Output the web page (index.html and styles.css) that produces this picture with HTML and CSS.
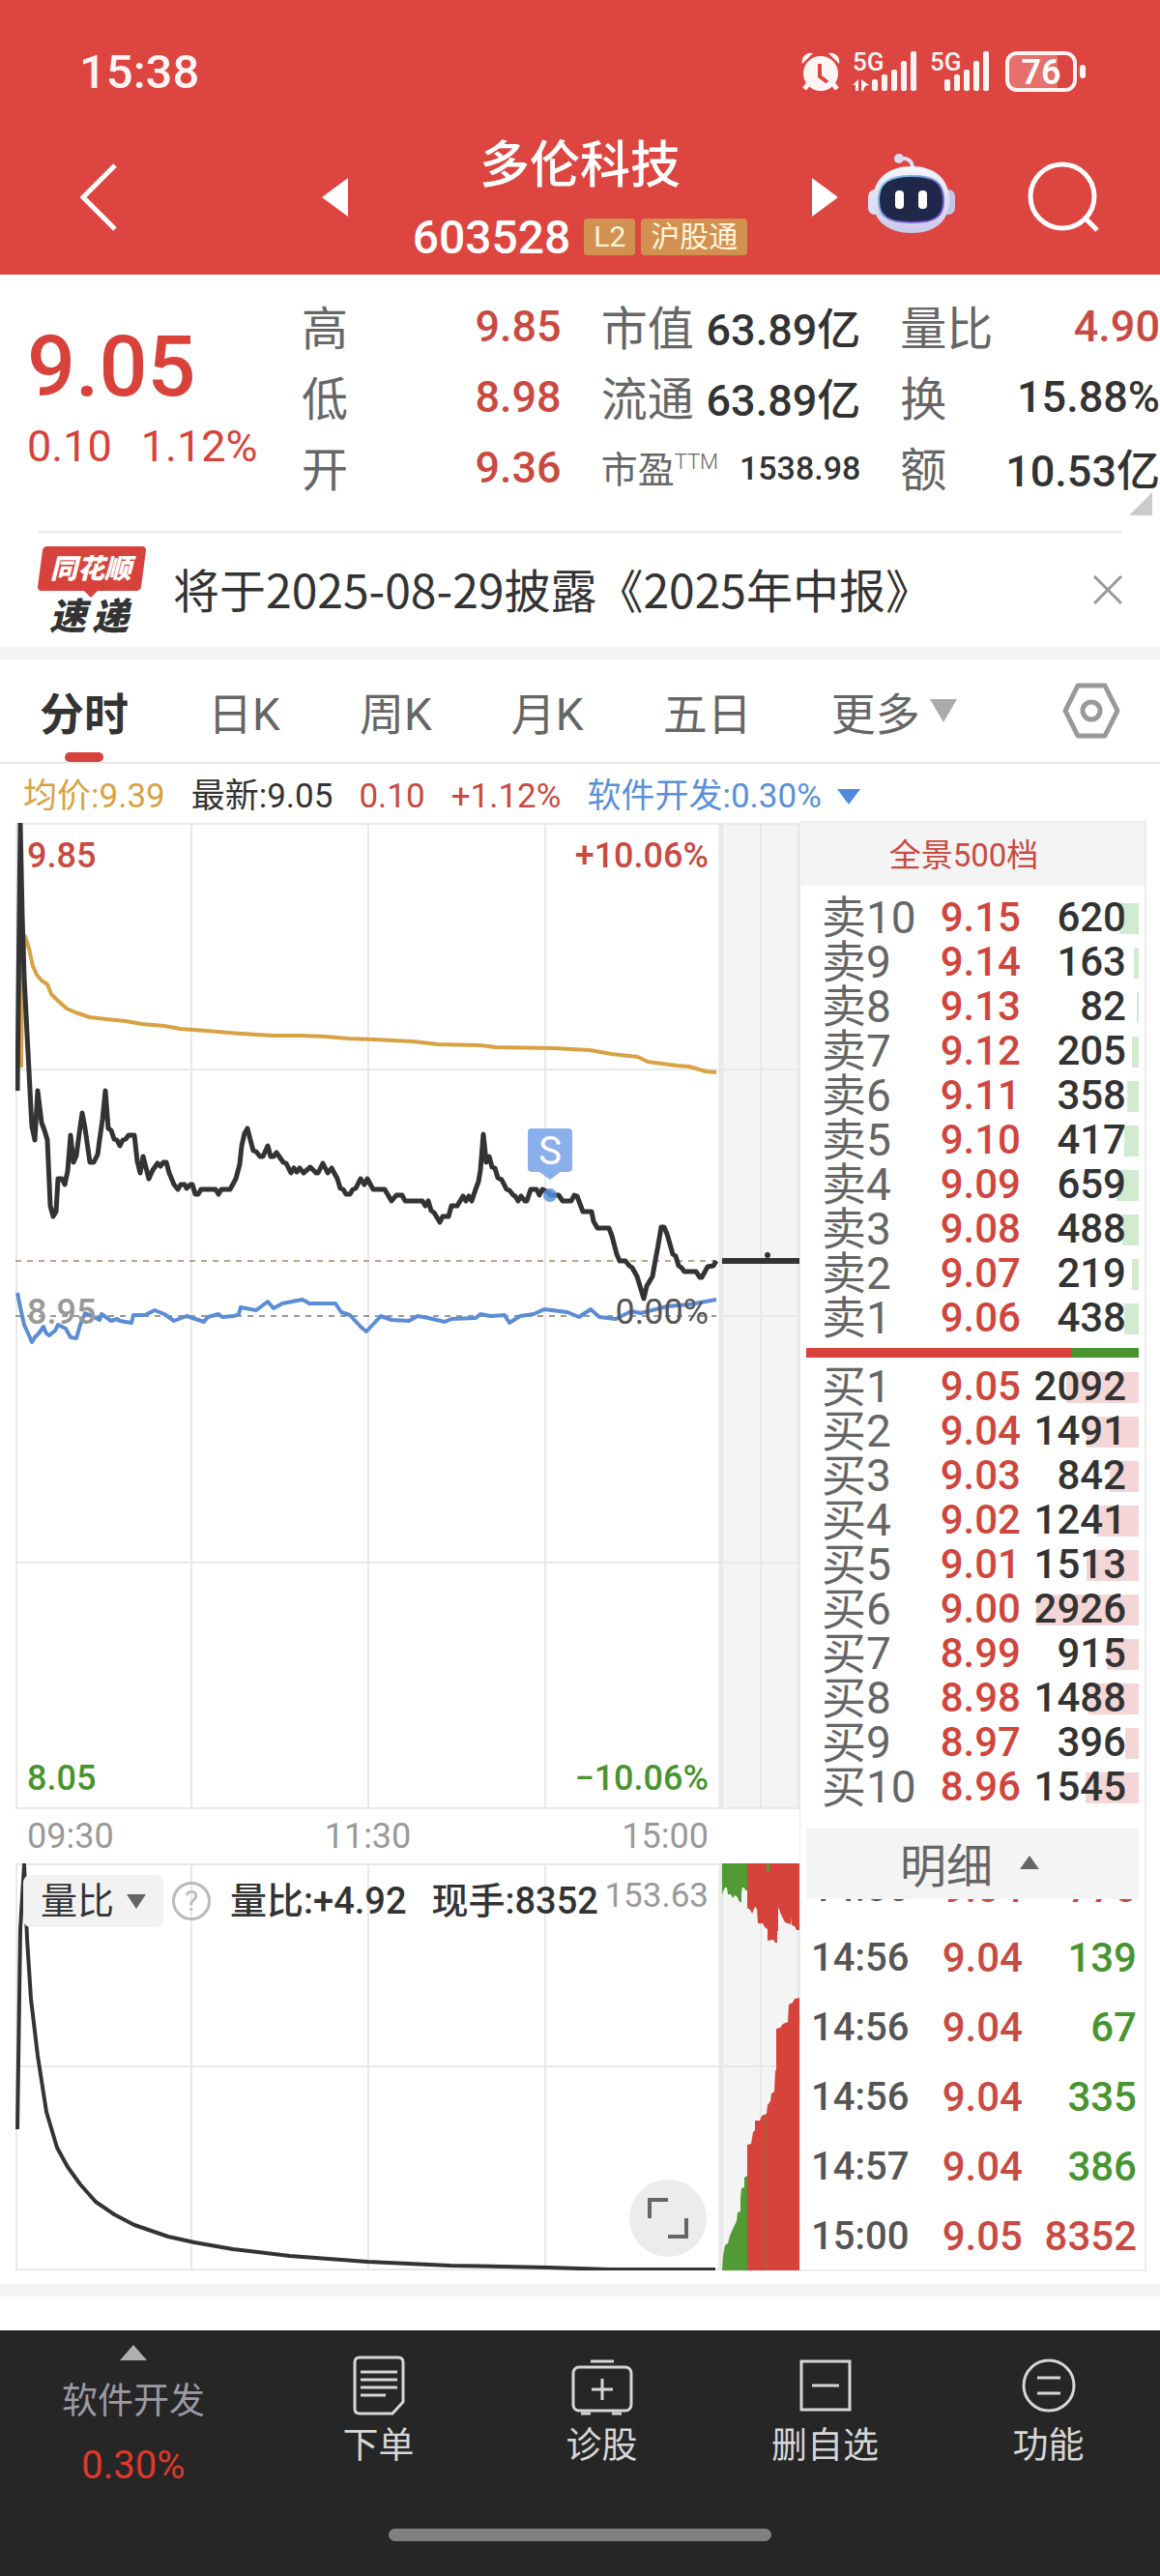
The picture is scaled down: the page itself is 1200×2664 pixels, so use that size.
FILE: index.html
```html
<!DOCTYPE html>
<html lang="zh-CN">
<head>
  <meta charset="UTF-8">
  <meta name="viewport" content="width=device-width, initial-scale=1">
  <title>多伦科技 603528</title>
  <link rel="stylesheet" href="styles.css">
</head>
<body>
  <header class="header">
    <div class="status-bar">
      <span class="clock">15:38</span>
      <div class="status-icons">
        <svg class="alarm" width="40" height="42" viewBox="0 0 40 42" fill="#fff4f4">
          <circle cx="20" cy="23" r="18"/>
          <path d="M1 13a9 9 0 0 1 11-11zM39 13A9 9 0 0 0 28 2z"/>
          <path d="M8 33l-5 6M32 33l5 6" stroke="#fff4f4" stroke-width="5"/>
          <path d="M19 13v13l8 6" fill="none" stroke="#dd4540" stroke-width="4"/>
        </svg>
        <svg class="signal" width="67" height="42" viewBox="0 0 67 42" fill="#fff4f4">
          <text x="0" y="20" class="signal-text">5G</text>
          <path d="M6 29v12H3v-6H0zM9 29l8 6-4 1-2 5H9z"/>
          <rect x="20" y="29" width="6" height="12" rx="2"/>
          <rect x="30" y="24" width="6" height="17" rx="2"/>
          <rect x="40" y="19" width="6" height="22" rx="2"/>
          <rect x="50" y="10" width="6" height="31" rx="2"/>
          <rect x="60" y="0" width="6" height="41" rx="2"/>
        </svg>
        <svg class="signal" width="62" height="42" viewBox="0 0 62 42" fill="#fff4f4">
          <text x="0" y="20" class="signal-text">5G</text>
          <rect x="15" y="29" width="6" height="12" rx="2"/>
          <rect x="25" y="24" width="6" height="17" rx="2"/>
          <rect x="35" y="19" width="6" height="22" rx="2"/>
          <rect x="45" y="10" width="6" height="31" rx="2"/>
          <rect x="55" y="0" width="6" height="41" rx="2"/>
        </svg>
        <span class="battery">76</span>
      </div>
    </div>

    <nav class="title-bar">
      <div class="title-side">
        <button class="icon-btn" aria-label="返回">
          <svg width="40" height="72" viewBox="0 0 40 72"><path d="M37 3L4 36l33 33" fill="none" stroke="#fff" stroke-width="5"/></svg>
        </button>
        <button class="icon-btn" aria-label="上一只">
          <svg width="27" height="40" viewBox="0 0 27 40"><path d="M27 0v40L0 20z" fill="#fff"/></svg>
        </button>
      </div>
      <div class="title">
        <h1>多伦科技</h1>
        <div class="code-line">
          <span class="code">603528</span>
          <span class="badge">L2</span>
          <span class="badge">沪股通</span>
        </div>
      </div>
      <div class="title-side">
        <button class="icon-btn" aria-label="下一只">
          <svg width="27" height="40" viewBox="0 0 27 40"><path d="M0 0v40l27-20z" fill="#fff"/></svg>
        </button>
        <button class="icon-btn robot" aria-label="智能助手">
          <svg width="92" height="84" viewBox="0 0 92 84">
            <defs>
              <linearGradient id="shell" x1="0" y1="0" x2="0" y2="1">
                <stop offset="0" stop-color="#f6f6fd"/>
                <stop offset="1" stop-color="#c9c9ea"/>
              </linearGradient>
              <linearGradient id="rim" x1="0" y1="0" x2="1" y2="1">
                <stop offset="0" stop-color="#7fd6e6"/>
                <stop offset="1" stop-color="#6a35d0"/>
              </linearGradient>
            </defs>
            <path d="M33 6c9-1 14 2 14 10" fill="none" stroke="#dcdcf2" stroke-width="4"/>
            <circle cx="33" cy="6" r="5" fill="#dcdcf2"/>
            <rect x="1" y="38" width="14" height="26" rx="7" fill="#dedef4"/>
            <rect x="77" y="38" width="14" height="26" rx="7" fill="#c4c4e6"/>
            <path d="M46 14c24 0 39 13 39 35S70 83 46 83 6 71 6 49s16-35 40-35z" fill="url(#shell)"/>
            <path d="M46 24c24 0 33 7 33 25S69 72 46 72 12 67 12 49s10-25 34-25z" fill="#1f2849" stroke="url(#rim)" stroke-width="2"/>
            <rect x="29" y="39" width="9" height="19" rx="4" fill="#fff"/>
            <rect x="53" y="39" width="9" height="19" rx="4" fill="#fff"/>
          </svg>
        </button>
        <button class="icon-btn" aria-label="搜索">
          <svg width="76" height="76" viewBox="0 0 76 76"><circle cx="37" cy="37" r="33" fill="none" stroke="#fff" stroke-width="5"/><path d="M60 59l13 13" stroke="#fff" stroke-width="5"/></svg>
        </button>
      </div>
    </nav>
  </header>

  <section class="quote">
    <div class="price">
      <div class="price-now">9.05</div>
      <div class="price-change"><span>0.10</span><span>1.12%</span></div>
    </div>
    <dl class="stats">
      <div class="stat"><dt>高</dt><dd class="up">9.85</dd></div>
      <div class="stat"><dt>市值</dt><dd>63.89亿</dd></div>
      <div class="stat"><dt>量比</dt><dd class="up">4.90</dd></div>
      <div class="stat"><dt>低</dt><dd class="up">8.98</dd></div>
      <div class="stat"><dt>流通</dt><dd>63.89亿</dd></div>
      <div class="stat"><dt>换</dt><dd>15.88%</dd></div>
      <div class="stat"><dt>开</dt><dd class="up">9.36</dd></div>
      <div class="stat small"><dt>市盈<sup>TTM</sup></dt><dd>1538.98</dd></div>
      <div class="stat"><dt>额</dt><dd>10.53亿</dd></div>
    </dl>
    <span class="corner"></span>
  </section>

  <section class="news">
    <svg class="news-logo" width="112" height="92" viewBox="0 0 112 92">
      <path d="M10 1h98q4 0 4 4l-5 38q-1 4-5 4H62l-7 7-7-7H4q-4 0-4-4L5 5q1-4 5-4z" fill="#d8423c"/>
      <text x="13" y="34" class="logo-top">同花顺</text>
      <text x="12" y="87" class="logo-bottom">速</text>
      <text x="56" y="87" class="logo-bottom">递</text>
    </svg>
    <a class="news-text" href="#">将于2025-08-29披露《2025年中报》</a>
    <button class="icon-btn" aria-label="关闭">
      <svg width="30" height="30" viewBox="0 0 30 30"><path d="M1 1l28 28M29 1L1 29" stroke="#999" stroke-width="3"/></svg>
    </button>
  </section>

  <nav class="tabs">
    <button class="tab active">分时</button>
    <button class="tab">日K</button>
    <button class="tab">周K</button>
    <button class="tab">月K</button>
    <button class="tab">五日</button>
    <button class="tab">更多<svg width="28" height="24" viewBox="0 0 28 24"><path d="M0 0h28L14 24z" fill="#aaa"/></svg></button>
    <button class="icon-btn settings" aria-label="设置">
      <svg width="60" height="60" viewBox="0 0 60 60" fill="none" stroke="#999" stroke-width="5" stroke-linejoin="round"><path d="M16 4h28l13 26-13 26H16L3 30z"/><circle cx="30" cy="30" r="9"/></svg>
    </button>
  </nav>

  <div class="legend">
    <span class="avg">均价:9.39</span>
    <span>最新:9.05</span>
    <span class="up">0.10</span>
    <span class="up">+1.12%</span>
    <button class="sector">软件开发:0.30%<svg width="24" height="16" viewBox="0 0 24 16"><path d="M0 0h24L12 16z" fill="#4f8ae0"/></svg></button>
  </div>

  <main class="board">
    <div class="charts">
      <!-- 分时走势 -->
      <div class="plot trend">
        <svg class="plot-svg" viewBox="0 0 811 1020" preserveAspectRatio="none">
          <rect x="731" y="0" width="80" height="1020" fill="#f4f4f4"/>
          <g class="grid">
            <path d="M182 0v1020M365 0v1020M548 0v1020M771 0v1020"/>
            <path d="M0 255h811M0 765h811M731 510h80"/>
            <path d="M1 1h809v1018H1z"/>
            <path d="M730 0v1020" class="grid-bold"/>
          </g>
          <path d="M0 510h725" class="dash" stroke="#999"/>
          <path d="M0 453h725" class="dash" stroke="#b3a88a"/>
          <polyline class="line-avg" points="6,253 7,160 10,117 14,130 18,148 22,157 27,163 33,167 37,177 44,184 53,192 62,196 77,201 94,203 114,205 131,208 154,210 171,213 197,215 234,218 267,220 297,220 321,221 344,223 371,224 391,225 411,226 437,229 481,230 497,232 557,233 594,235 617,239 644,242 654,247 684,251 697,252 714,257 725,258"/>
          <polyline class="line-sector" points="2,486 5,501 9,519 14,530 17,537 20,532 24,528 29,521 32,528 35,530 41,525 44,519 52,523 57,532 63,533 67,519 72,507 77,509 87,514 89,508 99,515 105,513 108,515 120,517 122,509 134,509 144,504 154,508 164,515 177,510 195,516 199,511 210,508 214,511 226,510 231,508 233,501 249,504 261,495 267,502 276,497 297,493 304,497 331,497 337,506 346,509 357,521 363,526 378,510 389,514 407,515 416,510 427,512 444,516 451,513 476,512 481,508 491,510 506,509 511,517 522,510 536,508 547,503 571,506 583,511 595,503 604,511 621,513 627,510 637,505 647,507 674,500 697,498 725,493"/>
          <polyline class="line-price" points="2,277 5,1 7,96 9,160 12,218 16,296 17,314 20,328 23,277 27,310 30,318 33,328 36,396 39,407 42,402 44,368 48,368 51,374 54,360 57,323 60,351 63,344 66,321 69,300 72,316 77,351 81,351 85,343 87,328 90,307 93,277 96,316 99,318 102,327 105,328 108,334 111,328 114,327 117,323 123,323 126,350 129,362 132,345 138,368 142,359 147,352 150,355 153,351 156,351 159,362 164,374 168,379 171,374 175,374 177,378 181,374 183,374 186,384 189,384 192,379 207,379 210,384 213,379 222,379 228,368 232,353 234,334 237,321 240,316 243,328 246,339 249,340 253,345 256,345 261,334 264,345 267,345 270,341 277,351 280,352 285,362 288,357 291,361 294,357 298,362 305,356 311,362 313,362 318,352 323,362 327,357 333,368 336,378 339,379 342,384 346,384 349,379 352,378 357,368 361,374 364,368 370,379 382,379 389,391 394,385 400,385 403,391 421,391 424,396 427,391 430,401 433,403 439,413 442,407 448,407 451,396 457,396 463,386 466,391 469,386 472,391 476,379 479,371 481,359 484,322 487,351 490,345 493,356 496,357 499,367 503,369 508,379 511,380 515,385 517,386 520,391 523,386 527,391 529,391 533,379 539,379 542,385 545,379 551,382 553,385 562,385 566,391 575,391 578,385 581,386 584,394 587,402 596,402 598,412 602,419 614,419 617,427 622,446 625,453 631,453 635,458 638,460 643,469 650,492 653,479 659,469 662,452 665,436 668,418 671,418 674,425 680,446 683,448 686,458 689,460 692,464 704,464 708,470 710,470 716,459 722,458 725,453"/>
          <path d="M731 453h80" stroke="#333" stroke-width="6"/>
          <circle cx="778" cy="447" r="3" fill="#333"/>
          <!-- 卖出标记 -->
          <path d="M534 316h38q4 0 4 4v37q0 4-4 4h-8l-11 8-11-8h-8q-4 0-4-4v-37q0-4 4-4z" fill="#8ab0ec"/>
          <text x="553" y="353" class="marker-text">S</text>
          <circle cx="553" cy="385" r="7" fill="#5b90e0" fill-opacity=".85"/>
        </svg>
        <div class="plot-row"><span class="up">9.85</span><span class="up">+10.06%</span></div>
        <div class="plot-row zero"><span class="muted">8.95</span><span class="dim">0.00%</span></div>
        <div class="plot-row"><span class="down">8.05</span><span class="down">−10.06%</span></div>
      </div>

      <div class="time-axis"><span>09:30</span><span>11:30</span><span>15:00</span></div>

      <!-- 量比 -->
      <div class="plot ratio">
        <svg class="plot-svg" viewBox="0 0 811 421" preserveAspectRatio="none">
          <rect x="731" y="0" width="80" height="421" fill="#f4f4f4"/>
          <g class="grid">
            <path d="M182 0v421M365 0v421M548 0v421M771 0v421"/>
            <path d="M0 210h811"/>
            <path d="M1 1h809v419H1z"/>
            <path d="M730 0v421" class="grid-bold"/>
          </g>
          <path fill="#529a33" d="M731 0h27v28h-3l-1-3h-2l-1 6v9h-2l-2-5-3-2-2 3-2-4h-3l-1-7h-2l-2 4-1 4z"/>
          <path fill="#d6433b" d="M757 0h54v69h-3l-2-4-3-1-1-8v7l-6-2-4-8-3-8v25h-1v12h-2l-2-3-6 1V68l-3-2-2-4h-5l-1-15-2-2-3 7-2-4-3-2z"/>
          <path fill="#529a33" d="M777 0h3v9h-3z"/>
          <path fill="#529a33" d="M731 421l1-15 2-11 3-2 2-8 4-9 3-6 1-9 3-1v-14l1-10 3-1v-10l3-2v98z"/>
          <path fill="#d6433b" d="M757 421V291l4-1 2-12 2-2v-10h5l2-5 5-2 1-9 3-4 1-8 3-2 1-21 1-2v-42l4-1 3-4 5-2 1-18 4-2 2-4 5-1v282z"/>
          <path d="M777 259v162" stroke="#7d7b2c" stroke-width="1"/>
          <polyline class="line-ratio" points="2,275 5,68 9,1 12,78 16,140 23,199 32,257 43,294 54,314 67,332 83,350 102,363 123,374 158,386 185,392 225,399 284,406 364,412 450,416 552,418 616,420 724,420"/>
        </svg>
        <div class="ratio-head">
          <button class="ratio-pick">量比<svg width="20" height="15" viewBox="0 0 20 15"><path d="M0 0h20L10 15z" fill="#666"/></svg></button>
          <button class="help" aria-label="说明">?</button>
          <span class="ratio-value">量比:+4.92</span>
          <span class="ratio-value">现手:8352</span>
          <span class="ratio-max">153.63</span>
        </div>
        <button class="expand" aria-label="全屏">
          <svg width="44" height="44" viewBox="0 0 44 44"><path d="M3 22V3h19M41 22v19H22" fill="none" stroke="#666" stroke-width="4"/></svg>
        </button>
      </div>
    </div>

    <aside class="depth">
      <button class="depth-head">全景500档</button>
      <table class="book sell">
        <tr><th>卖10</th><td>9.15</td><td><i style="width:20px"></i><b>620</b></td></tr>
        <tr><th>卖9</th><td>9.14</td><td><i style="width:5px"></i><b>163</b></td></tr>
        <tr><th>卖8</th><td>9.13</td><td><i style="width:2px"></i><b>82</b></td></tr>
        <tr><th>卖7</th><td>9.12</td><td><i style="width:7px"></i><b>205</b></td></tr>
        <tr><th>卖6</th><td>9.11</td><td><i style="width:12px"></i><b>358</b></td></tr>
        <tr><th>卖5</th><td>9.10</td><td><i style="width:15px"></i><b>417</b></td></tr>
        <tr><th>卖4</th><td>9.09</td><td><i style="width:23px"></i><b>659</b></td></tr>
        <tr><th>卖3</th><td>9.08</td><td><i style="width:17px"></i><b>488</b></td></tr>
        <tr><th>卖2</th><td>9.07</td><td><i style="width:7px"></i><b>219</b></td></tr>
        <tr><th>卖1</th><td>9.06</td><td><i style="width:15px"></i><b>438</b></td></tr>
      </table>
      <div class="strength"><span style="width:80%"></span></div>
      <table class="book buy">
        <tr><th>买1</th><td>9.05</td><td><i style="width:75px"></i><b>2092</b></td></tr>
        <tr><th>买2</th><td>9.04</td><td><i style="width:54px"></i><b>1491</b></td></tr>
        <tr><th>买3</th><td>9.03</td><td><i style="width:30px"></i><b>842</b></td></tr>
        <tr><th>买4</th><td>9.02</td><td><i style="width:43px"></i><b>1241</b></td></tr>
        <tr><th>买5</th><td>9.01</td><td><i style="width:54px"></i><b>1513</b></td></tr>
        <tr><th>买6</th><td>9.00</td><td><i style="width:106px"></i><b>2926</b></td></tr>
        <tr><th>买7</th><td>8.99</td><td><i style="width:33px"></i><b>915</b></td></tr>
        <tr><th>买8</th><td>8.98</td><td><i style="width:52px"></i><b>1488</b></td></tr>
        <tr><th>买9</th><td>8.97</td><td><i style="width:14px"></i><b>396</b></td></tr>
        <tr><th>买10</th><td>8.96</td><td><i style="width:55px"></i><b>1545</b></td></tr>
      </table>
      <button class="detail-head">明细<svg width="20" height="14" viewBox="0 0 20 14"><path d="M0 14h20L10 0z" fill="#666"/></svg></button>
      <div class="ticks-wrap">
        <table class="ticks">
          <tr><td>14:56</td><td>9.04</td><td class="up">776</td></tr>
          <tr><td>14:56</td><td>9.04</td><td class="down">139</td></tr>
          <tr><td>14:56</td><td>9.04</td><td class="down">67</td></tr>
          <tr><td>14:56</td><td>9.04</td><td class="down">335</td></tr>
          <tr><td>14:57</td><td>9.04</td><td class="down">386</td></tr>
          <tr><td>15:00</td><td>9.05</td><td class="up">8352</td></tr>
        </table>
      </div>
    </aside>
  </main>

  <footer class="footer">
    <div class="toolbar">
      <button class="index-btn">
        <svg width="28" height="16" viewBox="0 0 28 16"><path d="M0 16h28L14 0z" fill="#b0b0b0"/></svg>
        <span class="index-name">软件开发</span>
        <span class="index-value">0.30%</span>
      </button>
      <button class="tool">
        <svg width="64" height="64" viewBox="0 0 64 64" fill="none" stroke="#d6d6d6" stroke-width="3"><path d="M12 3h40q5 0 5 5v41L46 61H12q-5 0-5-5V8q0-5 5-5z"/><path d="M13 18h38M13 26h38M13 34h38M13 42h26"/></svg>
        <span>下单</span>
      </button>
      <button class="tool">
        <svg width="64" height="64" viewBox="0 0 64 64" fill="none" stroke="#d6d6d6" stroke-width="3"><rect x="2" y="13" width="60" height="45" rx="6"/><path d="M20 7h24M32 25v22M21 36h22M10 61h10M42 61h10"/></svg>
        <span>诊股</span>
      </button>
      <button class="tool">
        <svg width="64" height="64" viewBox="0 0 64 64" fill="none" stroke="#d6d6d6" stroke-width="3"><path d="M7 7h50v50H7zM18 32h28"/></svg>
        <span>删自选</span>
      </button>
      <button class="tool">
        <svg width="64" height="64" viewBox="0 0 64 64" fill="none" stroke="#d6d6d6" stroke-width="3"><circle cx="32" cy="32" r="26"/><path d="M20 24h24M20 40h24"/></svg>
        <span>功能</span>
      </button>
    </div>
    <div class="home-bar"></div>
  </footer>
</body>
</html>
```
FILE: styles.css
```css
* {
  box-sizing: border-box;
}
body {
  margin: 0;
  font-family: Roboto, "Noto Sans CJK SC", sans-serif;
  background-color: #fff;
  color: #333;
}
button {
  padding: 0;
  border: none;
  background: none;
  font: inherit;
  color: inherit;
  cursor: pointer;
}
svg {
  display: block;
  flex: none;
}
.up {
  color: #c94a42;
}
.down {
  color: #479430;
}
.muted {
  color: #999;
}
.dim {
  color: #555;
}

/* 顶部 */
.header {
  height: 284px;
  background-color: #dd4540;
  color: #fff;
}
.status-bar {
  display: flex;
  justify-content: space-between;
  align-items: center;
  height: 136px;
  padding: 12px 77px 0 82px;
}
.clock {
  font-size: 49px;
  font-weight: 500;
  color: #fff4f4;
}
.status-icons {
  display: flex;
  align-items: center;
  gap: 13px;
}
.signal {
  overflow: visible;
}
.signal-text {
  font-size: 26px;
  font-weight: 500;
}
.battery {
  position: relative;
  width: 74px;
  height: 42px;
  margin: 0 9px 0 3px;
  border: 4px solid #fff4f4;
  border-radius: 12px;
  background: linear-gradient(to right, #e6706c 76%, transparent 76%);
  font-size: 36px;
  font-weight: 600;
  line-height: 36px;
  text-align: center;
}
.battery::after {
  content: "";
  position: absolute;
  top: 10px;
  right: -13px;
  width: 6px;
  height: 14px;
  border-radius: 3px;
  background-color: #fff4f4;
}
.title-bar {
  display: grid;
  grid-template-columns: 30% 40% 30%;
}
.title-side {
  display: flex;
  justify-content: space-between;
  align-items: center;
  height: 136px;
}
.title-side:first-child {
  padding-left: 82px;
}
.title-side:last-child {
  padding-right: 62px;
}
.robot {
  margin: 0 44px 8px 0;
}
.title {
  text-align: center;
}
.title h1 {
  margin: 0;
  font-size: 52px;
  font-weight: 500;
  line-height: 72px;
}
.code-line {
  display: flex;
  justify-content: center;
  align-items: center;
  gap: 6px;
  height: 74px;
}
.code {
  margin-right: 8px;
  font-size: 48px;
  font-weight: 500;
}
.badge {
  padding: 0 10px;
  border-radius: 4px;
  background-color: #d39151;
  color: #fff6dc;
  font-size: 30px;
  line-height: 38px;
}

/* 行情 */
.quote {
  position: relative;
  display: flex;
  height: 265px;
  padding-top: 17px;
}
.price {
  flex: none;
  width: 312px;
  padding: 36px 0 0 28px;
  color: #d8423a;
}
.price-now {
  font-size: 88px;
  font-weight: 500;
  line-height: 84px;
}
.price-change {
  display: flex;
  gap: 30px;
  font-size: 45px;
  line-height: 82px;
}
.stats {
  flex: 1;
  display: grid;
  grid-template-columns: repeat(3, 1fr);
  grid-auto-rows: 73px;
  column-gap: 41px;
  margin: 0;
}
.stat {
  display: flex;
  justify-content: space-between;
  align-items: center;
  font-size: 48px;
  white-space: nowrap;
}
.stat dt {
  padding-bottom: 3px;
  color: #666;
}
.stat dd {
  margin: 0;
  font-size: 45px;
  font-weight: 500;
}
.stat.small dt {
  font-size: 38px;
}
.stat.small dd {
  font-size: 34px;
}
.stat sup {
  font-size: 22px;
  font-weight: 300;
  line-height: 22px;
}
.corner {
  position: absolute;
  right: 8px;
  bottom: 16px;
  border-left: 24px solid transparent;
  border-bottom: 24px solid #ccc;
}

/* 公告 */
.news {
  display: flex;
  align-items: center;
  height: 120px;
  margin: 0 39px;
  border-top: 2px solid #ececec;
}
.logo-top {
  font-family: "Noto Sans CJK SC", sans-serif;
  font-size: 28px;
  font-weight: 900;
  font-style: italic;
  fill: #fff;
}
.logo-bottom {
  font-family: "Noto Sans CJK SC", sans-serif;
  font-size: 38px;
  font-weight: 900;
  font-style: italic;
  fill: #333;
}
.news-text {
  flex: 1;
  margin-left: 28px;
  padding-bottom: 4px;
  font-family: "Noto Sans CJK SC", sans-serif;
  font-size: 48px;
  color: #333;
  text-decoration: none;
  white-space: nowrap;
}

/* 周期切换 */
.tabs {
  display: flex;
  align-items: center;
  gap: 82px;
  height: 121px;
  padding: 0 41px;
  border-top: 13px solid #f4f4f4;
  border-bottom: 2px solid #e8e8e8;
  white-space: nowrap;
}
.tab {
  position: relative;
  display: flex;
  align-items: center;
  height: 106px;
  font-size: 46px;
  color: #666;
}
.tab svg {
  margin-left: 10px;
}
.tab.active {
  color: #333;
  font-weight: 700;
}
.tab.active::after {
  content: "";
  position: absolute;
  left: 50%;
  bottom: 0;
  width: 40px;
  height: 10px;
  margin-left: -20px;
  border-radius: 5px;
  background-color: #d7423a;
}
.settings {
  margin-left: auto;
}
.legend {
  display: flex;
  align-items: center;
  gap: 27px;
  height: 59px;
  padding: 8px 24px 0;
  font-size: 35px;
  line-height: 50px;
  white-space: nowrap;
}
.avg {
  color: #d8a244;
}
.sector {
  display: flex;
  align-items: center;
  color: #5b90d8;
}
.sector svg {
  margin-left: 16px;
}

/* 图表 + 盘口 */
.board {
  display: grid;
  grid-template-columns: 811fr 359fr;
  margin: 0 14px 13px 16px;
}
.charts {
  padding-top: 2px;
}
.plot {
  position: relative;
  font-size: 36px;
  line-height: 36px;
}
.plot-svg {
  position: absolute;
  inset: 0;
  width: 100%;
  height: 100%;
}
.trend {
  display: flex;
  flex-direction: column;
  justify-content: space-between;
  height: 1020px;
  padding: 16px 94px 14px 12px;
}
.plot-row {
  position: relative;
  display: flex;
  justify-content: space-between;
  font-weight: 500;
}
.plot-row.zero {
  padding-bottom: 10px;
}
.plot-row .dim {
  font-weight: 400;
}
.grid path {
  fill: none;
  stroke: #e8e8e8;
  stroke-width: 2;
}
.grid .grid-bold {
  stroke-width: 5;
}
.dash {
  stroke-width: 2;
  stroke-dasharray: 6 6;
}
polyline {
  fill: none;
  stroke-linejoin: round;
}
.line-avg {
  stroke: #d8a244;
  stroke-width: 4;
}
.line-sector {
  stroke: #5b8cd6;
  stroke-width: 4;
}
.line-price {
  stroke: #333;
  stroke-width: 5;
}
.line-ratio {
  stroke: #333;
  stroke-width: 4;
}
.marker-text {
  font-size: 40px;
  fill: #fff;
  text-anchor: middle;
}
.time-axis {
  display: flex;
  justify-content: space-between;
  padding: 0 94px 0 12px;
  font-size: 36px;
  line-height: 56px;
  color: #999;
}
.ratio {
  height: 421px;
}
.ratio-head {
  position: relative;
  display: flex;
  align-items: center;
  height: 78px;
  padding: 0 94px 0 8px;
  font-size: 38px;
  white-space: nowrap;
}
.ratio-pick {
  display: flex;
  align-items: center;
  gap: 13px;
  height: 54px;
  padding: 0 18px;
  border-radius: 8px;
  background-color: #f2f2f2;
}
.help {
  width: 40px;
  height: 40px;
  margin: 0 20px 0 9px;
  border: 3px solid #bbb;
  border-radius: 50%;
  color: #bbb;
  font-size: 30px;
  line-height: 34px;
}
.ratio-value {
  margin-right: 26px;
  font-weight: 500;
}
.ratio-max {
  flex: 1;
  display: flex;
  justify-content: flex-end;
  min-width: 0;
  margin-left: -26px;
  padding-bottom: 10px;
  font-size: 35px;
  color: #999;
}
.expand {
  position: absolute;
  right: 96px;
  bottom: 14px;
  display: flex;
  justify-content: center;
  align-items: center;
  width: 80px;
  height: 80px;
  border-radius: 50%;
  background-color: #ececec;
}
.depth {
  height: 1500px;
  border: 2px solid #ececec;
  border-left-width: 1px;
}
.depth-head {
  display: block;
  width: 100%;
  height: 65px;
  margin-bottom: 10px;
  padding: 0 18px 4px 0;
  background-color: #f4f4f4;
  color: #c94a42;
  font-size: 33px;
}
.book,
.ticks {
  width: 100%;
  border-collapse: collapse;
  table-layout: fixed;
}
.book th,
.book td {
  position: relative;
  height: 46px;
  padding: 0;
  font-size: 42px;
  font-weight: 500;
  line-height: 46px;
  text-align: right;
}
.book th {
  width: 128px;
  padding-left: 22px;
  color: #666;
  font-size: 46px;
  font-weight: 400;
  text-align: left;
}
.book td {
  width: 100px;
  color: #d0463d;
}
.book td:last-child {
  width: auto;
  padding-right: 19px;
  color: #333;
}
.book b {
  position: relative;
  font-weight: 500;
}
.book i {
  position: absolute;
  top: 8px;
  right: 6px;
  height: 32px;
  background-color: #f4d6d6;
}
.book.sell i {
  background-color: #d2ead0;
}
.strength {
  height: 10px;
  margin: 8px 6px 7px;
  background-color: #479430;
}
.strength span {
  display: block;
  height: 100%;
  background-color: #d7423a;
}
.detail-head {
  display: flex;
  justify-content: center;
  align-items: center;
  gap: 28px;
  width: calc(100% - 12px);
  height: 73px;
  margin: 20px 6px 0;
  padding: 0 6px 3px 0;
  background-color: #f4f4f4;
  color: #666;
  font-size: 48px;
}
.ticks-wrap {
  display: flex;
  align-items: flex-end;
  height: 384px;
  overflow: hidden;
}
.ticks td {
  height: 72px;
  padding: 0;
  font-size: 42px;
  font-weight: 500;
  text-align: right;
}
.ticks td:first-child {
  width: 128px;
  padding-left: 11px;
  color: #555;
  font-size: 40px;
  text-align: left;
}
.ticks td:nth-child(2) {
  width: 102px;
  color: #c94a42;
}
.ticks td:last-child {
  padding-right: 8px;
}

/* 底部 */
.footer {
  height: 302px;
  padding-top: 35px;
  border-top: 13px solid #f4f4f4;
}
.toolbar {
  display: grid;
  grid-template-columns: 23% repeat(4, 1fr);
  height: 186px;
  background-color: #262626;
  color: #d6d6d6;
  font-size: 37px;
}
.tool {
  display: flex;
  flex-direction: column;
  align-items: center;
  padding-top: 25px;
  line-height: 62px;
}
.index-btn {
  display: flex;
  flex-direction: column;
  align-items: center;
  padding-top: 15px;
  line-height: 66px;
}
.index-name {
  margin-top: 10px;
  color: #9a9aa5;
}
.index-value {
  color: #e0382c;
  font-size: 40px;
}
.home-bar {
  height: 68px;
  padding-top: 19px;
  background-color: #262626;
}
.home-bar::before {
  content: "";
  display: block;
  width: 33%;
  height: 13px;
  margin: 0 auto;
  border-radius: 7px;
  background-color: #808080;
}
```
